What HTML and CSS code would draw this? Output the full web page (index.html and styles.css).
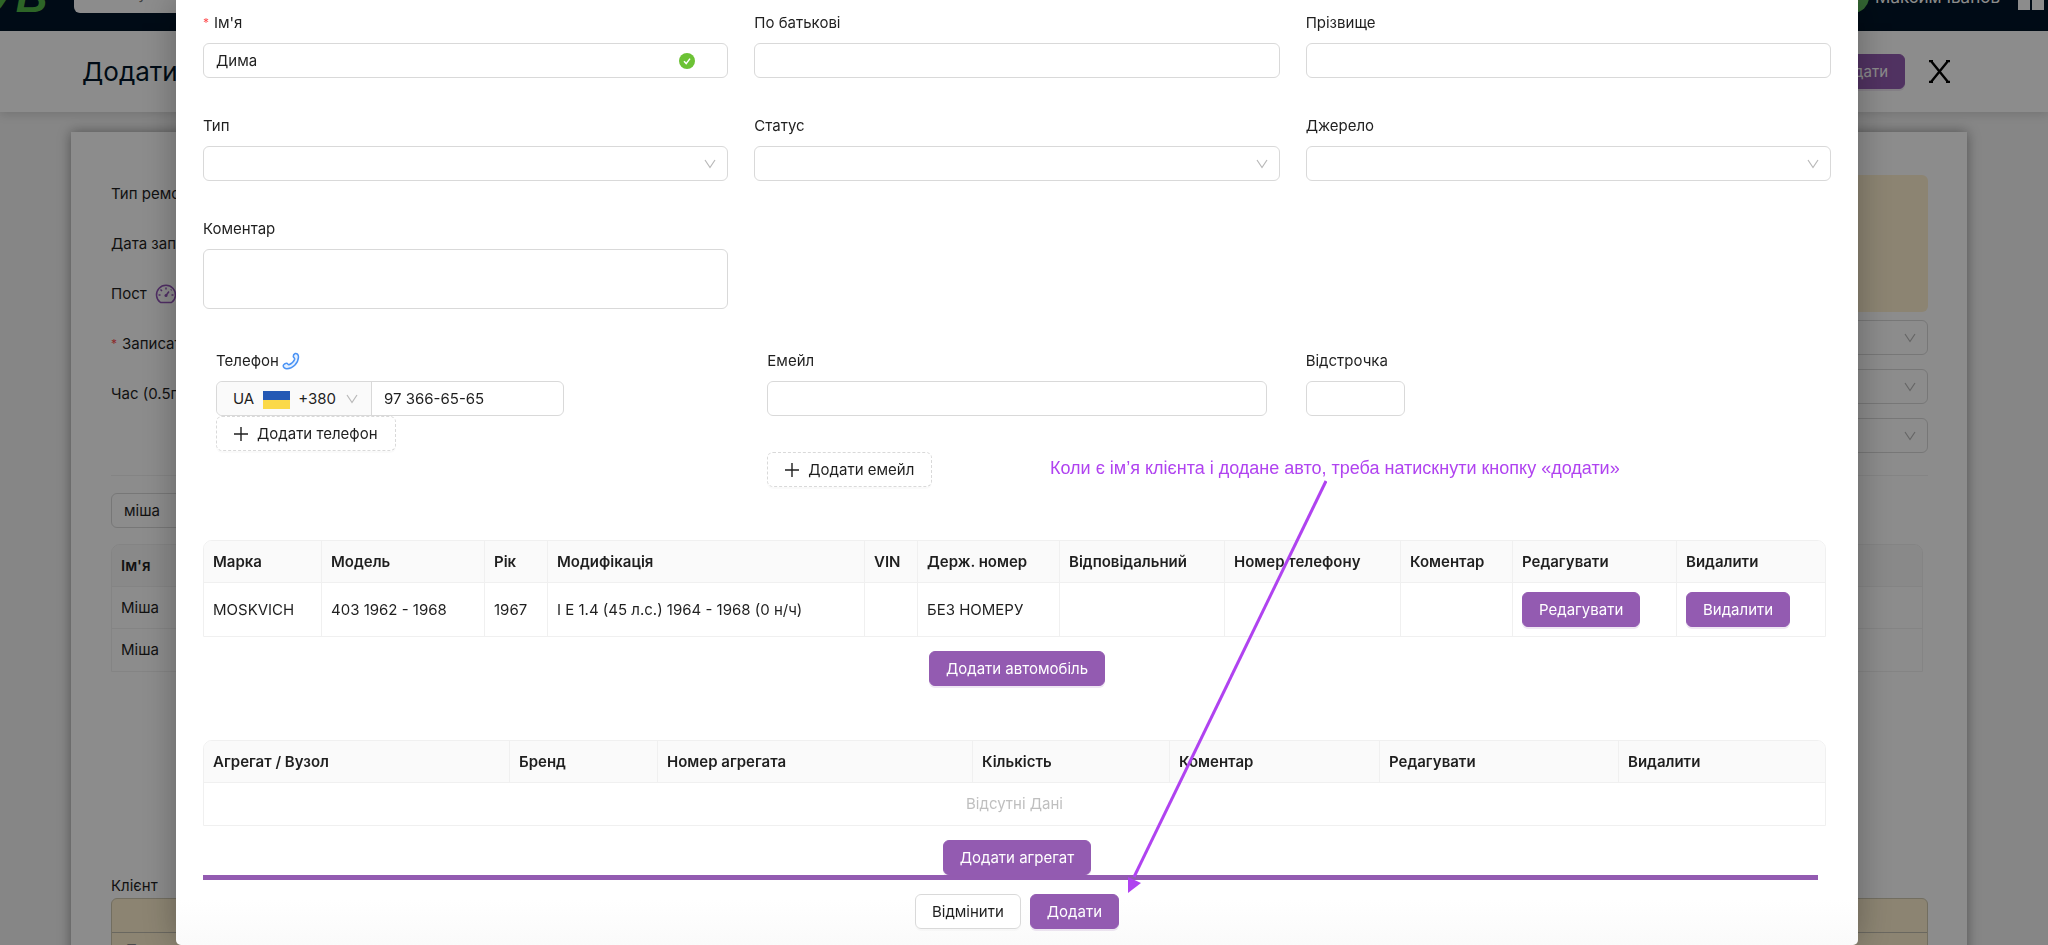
FILE: index.html
```html
<!DOCTYPE html>
<html lang="uk">
<head>
<meta charset="utf-8">
<title>Додати клієнта</title>
<link rel="stylesheet" href="styles.css">
</head>
<body>
<svg class="sprite" aria-hidden="true">
  <symbol id="chevron" viewBox="0 0 12 12"><path d="M1 2 6 9.500 11 2" fill="none" stroke="currentColor" stroke-width="1.200"/></symbol>
  <symbol id="plus" viewBox="0 0 14 14"><path d="M7 0V14M0 7H14" fill="none" stroke="currentColor" stroke-width="1.400"/></symbol>
</svg>

<div class="page" inert>
  <header class="topbar">
    <div class="logo">УВ</div>
    <input class="search" type="search" aria-label="Пошук" placeholder="Пошук">
    <div class="user">
      <span class="avatar">A</span>
      <span class="user-name">Максим Іванов</span>
      <svg class="apps" viewBox="0 0 26 26"><path d="M0 0H12V12H0ZM14 0H26V12H14ZM0 14H12V26H0ZM14 14H26V26H14Z" fill="#fff"/></svg>
    </div>
  </header>
  <div class="titlebar">
    <h1 class="title">Додати запис</h1>
    <div class="title-actions">
      <button class="btn primary" type="button">Додати</button>
      <button class="close" type="button" aria-label="Закрити"><svg viewBox="0 0 21 23"><path d="M2 1 19 22M19 1 2 22M0 1H4M17 1H21M0 22H4M17 22H21" fill="none" stroke="#000" stroke-width="2.400"/></svg></button>
    </div>
  </div>
  <main class="card">
    <div class="record">
      <div class="record-labels">
        <div class="record-label">Тип ремонту</div>
        <div class="record-label">Дата запису</div>
        <div class="record-label">Пост
          <svg class="gauge" viewBox="0 0 22 22"><path d="M5.500 19.500A9.500 9.500 0 1 1 16.500 19.500Z M11 12.500 14 8.500 M11 4.500V6.500 M5.500 6.500 7 8 M16.500 6.500 15.800 7.200 M3.500 12H5.500 M16.500 12H18.500" fill="none" stroke="#9254b8" stroke-width="1.500" stroke-linejoin="round"/><circle cx="11" cy="12.500" r="1.500" fill="#9254b8"/></svg>
        </div>
        <div class="record-label"><span class="star">*</span>Записати</div>
        <div class="record-label">Час (0.5г)</div>
      </div>
      <div class="record-side">
        <div class="note"></div>
        <div class="select-wrap"><select class="control" aria-label="Пост"><option></option></select><svg class="chevron"><use href="#chevron"/></svg></div>
        <div class="select-wrap"><select class="control" aria-label="Майстер"><option></option></select><svg class="chevron"><use href="#chevron"/></svg></div>
        <div class="select-wrap"><select class="control" aria-label="Час"><option></option></select><svg class="chevron"><use href="#chevron"/></svg></div>
      </div>
    </div>
    <div class="client-search">
      <input class="control" type="text" aria-label="Пошук клієнта" value="міша">
    </div>
    <table class="grid found">
      <thead><tr><th>Ім'я</th></tr></thead>
      <tbody><tr><td>Міша</td></tr><tr><td>Міша</td></tr></tbody>
    </table>
    <div class="client-title">Клієнт</div>
    <div class="client-box"><div class="client-row"></div><div class="client-row">П</div></div>
  </main>
</div>

<div class="mask">
  <form class="modal">
    <div class="fields">
      <div class="field">
        <label class="label" for="name"><span class="star">*</span>Ім'я</label>
        <div class="select-wrap"><input class="control" id="name" type="text" value="Дима">
          <svg class="ok" viewBox="0 0 16 16"><circle cx="8" cy="8" r="8" fill="#6cc235"/><path d="M5 8.200 7.200 10.600 11 5.600" fill="none" stroke="#fff" stroke-width="1.500"/></svg></div>
      </div>
      <div class="field"><label class="label" for="patronymic">По батькові</label><input class="control" id="patronymic" type="text"></div>
      <div class="field"><label class="label" for="surname">Прізвище</label><input class="control" id="surname" type="text"></div>
      <div class="field"><label class="label" for="type">Тип</label><div class="select-wrap"><select class="control" id="type"><option></option></select><svg class="chevron"><use href="#chevron"/></svg></div></div>
      <div class="field"><label class="label" for="status">Статус</label><div class="select-wrap"><select class="control" id="status"><option></option></select><svg class="chevron"><use href="#chevron"/></svg></div></div>
      <div class="field"><label class="label" for="source">Джерело</label><div class="select-wrap"><select class="control" id="source"><option></option></select><svg class="chevron"><use href="#chevron"/></svg></div></div>
      <div class="field"><label class="label" for="comment">Коментар</label><textarea class="control area" id="comment"></textarea></div>
    </div>

    <div class="fields contacts">
      <div class="field inset">
        <label class="label" for="phone">Телефон
          <svg class="phone-icon" viewBox="0 0 18 18"><path d="M13.200 1.500C14.800 1 16.500 2.500 16.500 5C16.300 11.300 10.500 16.700 5 16.700C3 16.800 1.200 15.300 1.200 13.800C1.300 12.500 3.800 10.800 5 11.200C6 11.500 6 13 7 12.700C9.600 11.700 11.700 9.600 12.700 7.200C13.100 6.100 11.500 5.600 11.300 4.500C11.200 3.500 12.200 1.900 13.200 1.500Z" fill="#e6f1ff" stroke="#4a93f5" stroke-width="1.500"/></svg>
        </label>
        <div class="phone">
          <div class="code">
            <span>UA</span>
            <svg class="flag" viewBox="0 0 27 18"><path d="M0 0H27V9H0Z" fill="#2459b5"/><path d="M0 9H27V18H0Z" fill="#fbd949"/></svg>
            <select class="code-select" aria-label="Код країни"><option>+380</option></select>
            <svg class="code-chevron"><use href="#chevron"/></svg>
          </div>
          <input class="number" id="phone" type="tel" value="97 366-65-65">
        </div>
        <button class="btn dashed" type="button"><svg class="plus"><use href="#plus"/></svg>Додати телефон</button>
      </div>
      <div class="field inset">
        <label class="label" for="email">Емейл</label>
        <input class="control" id="email" type="email">
        <button class="btn dashed spaced" type="button"><svg class="plus"><use href="#plus"/></svg>Додати емейл</button>
      </div>
      <div class="field"><label class="label" for="delay">Відстрочка</label><input class="control short" id="delay" type="text"></div>
    </div>

    <table class="grid cars">
      <colgroup><col class="c-make"><col class="c-model"><col class="c-year"><col class="c-mod"><col class="c-vin"><col class="c-plate"><col class="c-resp"><col class="c-tel"><col class="c-note"><col class="c-edit"><col></colgroup>
      <thead><tr><th>Марка</th><th>Модель</th><th>Рік</th><th>Модифікація</th><th>VIN</th><th>Держ. номер</th><th>Відповідальний</th><th>Номер телефону</th><th>Коментар</th><th>Редагувати</th><th>Видалити</th></tr></thead>
      <tbody><tr><td>MOSKVICH</td><td>403 1962 - 1968</td><td>1967</td><td>I E 1.4 (45 л.с.) 1964 - 1968 (0 н/ч)</td><td></td><td>БЕЗ НОМЕРУ</td><td></td><td></td><td></td><td><button class="btn primary" type="button">Редагувати</button></td><td><button class="btn primary" type="button">Видалити</button></td></tr></tbody>
    </table>
    <div class="center"><button class="btn primary" type="button">Додати автомобіль</button></div>

    <table class="grid units">
      <colgroup><col class="u-unit"><col class="u-brand"><col class="u-number"><col class="u-count"><col class="u-note"><col class="u-edit"><col></colgroup>
      <thead><tr><th>Агрегат / Вузол</th><th>Бренд</th><th>Номер агрегата</th><th>Кількість</th><th>Коментар</th><th>Редагувати</th><th>Видалити</th></tr></thead>
      <tbody><tr><td class="empty" colspan="7">Відсутні Дані</td></tr></tbody>
    </table>
    <div class="center"><button class="btn primary" type="button">Додати агрегат</button></div>
    <hr class="rule">
    <div class="center footer">
      <button class="btn" type="button">Відмінити</button>
      <button class="btn primary" type="submit">Додати</button>
    </div>

    <p class="hint">Коли є ім’я клієнта і додане авто, треба натискнути кнопку «додати»</p>
    <svg class="arrow" viewBox="0 0 200 414"><path d="M199 1 7 397" stroke="#b043f0" stroke-width="3"/><path d="M1 413V397L14 403Z" fill="#b043f0"/></svg>
  </form>
</div>
</body>
</html>
```
FILE: styles.css
```css
* { box-sizing: border-box; }
body {
  margin: 0;
  height: 100vh;
  overflow: hidden;
  font: 15px/24px Inter, "Noto Sans", sans-serif;
  color: #1f1f1f;
  background: #f4f4f4;
}
.sprite { display: none; }
input, select, textarea, button { font: inherit; color: inherit; }

.page { height: 100vh; overflow: hidden; }
.topbar {
  display: flex;
  align-items: center;
  height: 60px;
  margin-top: -29px;
  background: #001529;
}
.logo {
  width: 84px;
  margin-left: -14px;
  padding-bottom: 8px;
  font: italic bold 44px/36px "Liberation Sans", sans-serif;
  color: #52b848;
}
.search {
  width: 400px;
  height: 36px;
  margin: 0 auto 12px 4px;
  padding: 0 32px 4px;
  border: 0;
  border-radius: 6px;
  background: #fff;
}
.user { display: flex; align-items: center; gap: 6px; padding: 0 4px 8px 0; color: #fff; }
.avatar { width: 32px; height: 32px; border-radius: 50%; background: #5cb85c; text-align: center; line-height: 32px; }
.user-name { font-size: 17px; line-height: 20px; }
.apps { width: 26px; height: 26px; margin-left: 12px; }

.titlebar {
  display: flex;
  align-items: center;
  justify-content: space-between;
  height: 81px;
  padding: 0 98px 0 82px;
  background: #fff;
  box-shadow: 0 2px 10px rgba(0, 0, 0, .15);
}
.title { margin: 0; font-size: 26px; font-weight: 400; line-height: 32px; color: #001529; }
.title-actions { display: flex; align-items: center; gap: 24px; }
.close { width: 21px; height: 23px; padding: 0; border: 0; background: none; }
.close svg { display: block; width: 100%; height: 100%; }

.card {
  margin: 20px 81px 0 71px;
  padding: 37px 39px 0 40px;
  min-height: 900px;
  background: #fff;
  box-shadow: 0 0 12px rgba(0, 0, 0, .4);
}
.record { display: flex; justify-content: space-between; padding-bottom: 22px; border-bottom: 1px solid #f0f0f0; }
.record-label { display: flex; align-items: center; height: 50px; }
.gauge { width: 22px; height: 22px; margin-left: 8px; }
.star { margin-right: 5px; color: #ff4d4f; font-size: 12px; }
.record-side { width: 30%; padding-top: 6px; }
.note { height: 137px; border-radius: 6px; background: #fff1d0; }
.record-side .select-wrap { margin-top: 8px; }
.record-side .select-wrap + .select-wrap { margin-top: 14px; }
.client-search { width: 50%; padding: 17px 0 16px; }
.client-title { padding: 202px 0 0; }
.client-box { border: 1px solid #d0c9b0; border-radius: 6px 6px 0 0; background: #fff1d0; }
.client-row { height: 34px; padding: 5px 14px; border-bottom: 1px solid #c0bcae; color: #888; }

.mask { position: fixed; inset: 0; padding: 0 190px 0 176px; background: rgba(0, 0, 0, .45); }
.modal {
  position: relative;
  min-height: 100%;
  padding: 11px 27px 0;
  border-radius: 0 0 5px 5px;
  background: linear-gradient(#fff 900px, #fafafa);
  box-shadow: 0 0 36px rgba(0, 0, 0, .3);
}
.fields { display: grid; grid-template-columns: repeat(3, 1fr); gap: 36px 26px; align-items: start; }
.contacts { margin-top: 40px; }
.inset { padding: 0 13px; }
.label { display: flex; align-items: center; height: 24px; margin-bottom: 8px; }
.control {
  display: block;
  width: 100%;
  height: 35px;
  padding: 0 12px;
  border: 1px solid #d9d9d9;
  border-radius: 6px;
  outline: 0;
  appearance: none;
  background: transparent;
}
.area { height: 60px; resize: none; }
.short { width: 99px; }
.select-wrap { display: grid; align-items: center; }
.select-wrap > * { grid-area: 1 / 1; }
.chevron { width: 12px; height: 12px; margin-right: 12px; justify-self: end; color: #b8b8b8; pointer-events: none; }
.ok { width: 16px; height: 16px; margin-right: 33px; justify-self: end; }
.phone-icon { width: 18px; height: 18px; margin-left: 3px; }

.phone { display: flex; width: 348px; height: 35px; border: 1px solid #d9d9d9; border-radius: 6px; }
.code {
  display: flex;
  align-items: center;
  width: 155px;
  padding: 0 13px 0 16px;
  border-right: 1px solid #d9d9d9;
  border-radius: 6px 0 0 6px;
  background: #fafafa;
}
.flag { width: 27px; height: 18px; margin: 3px 8px 0 9px; }
.code-select { flex: 1; min-width: 0; padding: 0; border: 0; appearance: none; background: none; }
.code-chevron { width: 12px; height: 12px; color: #b8b8b8; }
.number { flex: 1; min-width: 0; padding: 0 12px; border: 0; outline: 0; background: none; }

.btn {
  display: inline-flex;
  align-items: center;
  height: 35px;
  padding: 0 16px;
  border: 1px solid #d9d9d9;
  border-radius: 6px;
  background: #fff;
  box-shadow: 0 2px 0 rgba(0, 0, 0, .02);
  white-space: nowrap;
}
.primary { border-color: #935bb1; background: #935bb1; color: #fff; box-shadow: 0 2px 0 rgba(147, 91, 177, .15); }
.dashed { padding: 0 17px; border-style: dashed; }
.spaced { margin-top: 36px; }
.plus { width: 14px; height: 14px; margin: 0 9px 0 0; }

.grid {
  width: 100%;
  border: 1px solid #f0f0f0;
  border-radius: 9px 9px 0 0;
  border-spacing: 0;
}
.grid th, .grid td {
  height: 42px;
  padding: 0 9px;
  border-bottom: 1px solid #f0f0f0;
  border-right: 1px solid #f0f0f0;
  text-align: left;
  white-space: nowrap;
}
.grid th { background: #fafafa; font-weight: 600; }
.grid tr > :last-child { border-right: 0; }
.grid th:first-child { border-top-left-radius: 8px; }
.grid th:last-child { border-top-right-radius: 8px; }
.grid tbody tr:last-child td { border-bottom: 0; }
.found { width: calc(100% - 5px); }
.cars, .units { width: calc(100% - 5px); table-layout: fixed; }
.cars { margin-top: 53px; }
.cars td { height: 53px; }
.units { margin-top: 54px; }
.grid .empty { text-align: center; color: #bfbfbf; }
.c-make { width: 118px; }
.c-model { width: 163px; }
.c-year { width: 63px; }
.c-mod { width: 317px; }
.c-vin { width: 53px; }
.c-plate { width: 142px; }
.c-resp { width: 165px; }
.c-tel { width: 176px; }
.c-note { width: 112px; }
.c-edit { width: 164px; }
.u-unit { width: 306px; }
.u-brand { width: 148px; }
.u-number { width: 315px; }
.u-count { width: 197px; }
.u-note { width: 210px; }
.u-edit { width: 239px; }

.center { display: flex; justify-content: center; gap: 9px; padding-top: 14px; }
.rule { height: 5px; margin: 0 13px 0 0; border: 0; background: #935bb1; }
.footer { padding-top: 14px; }

.hint {
  position: absolute;
  top: 456px;
  left: 874px;
  margin: 0;
  font: 18px/24px "Liberation Sans", sans-serif;
  color: #b043f0;
  white-space: nowrap;
}
.arrow { position: absolute; top: 480px; left: 951px; width: 200px; height: 414px; }
```
